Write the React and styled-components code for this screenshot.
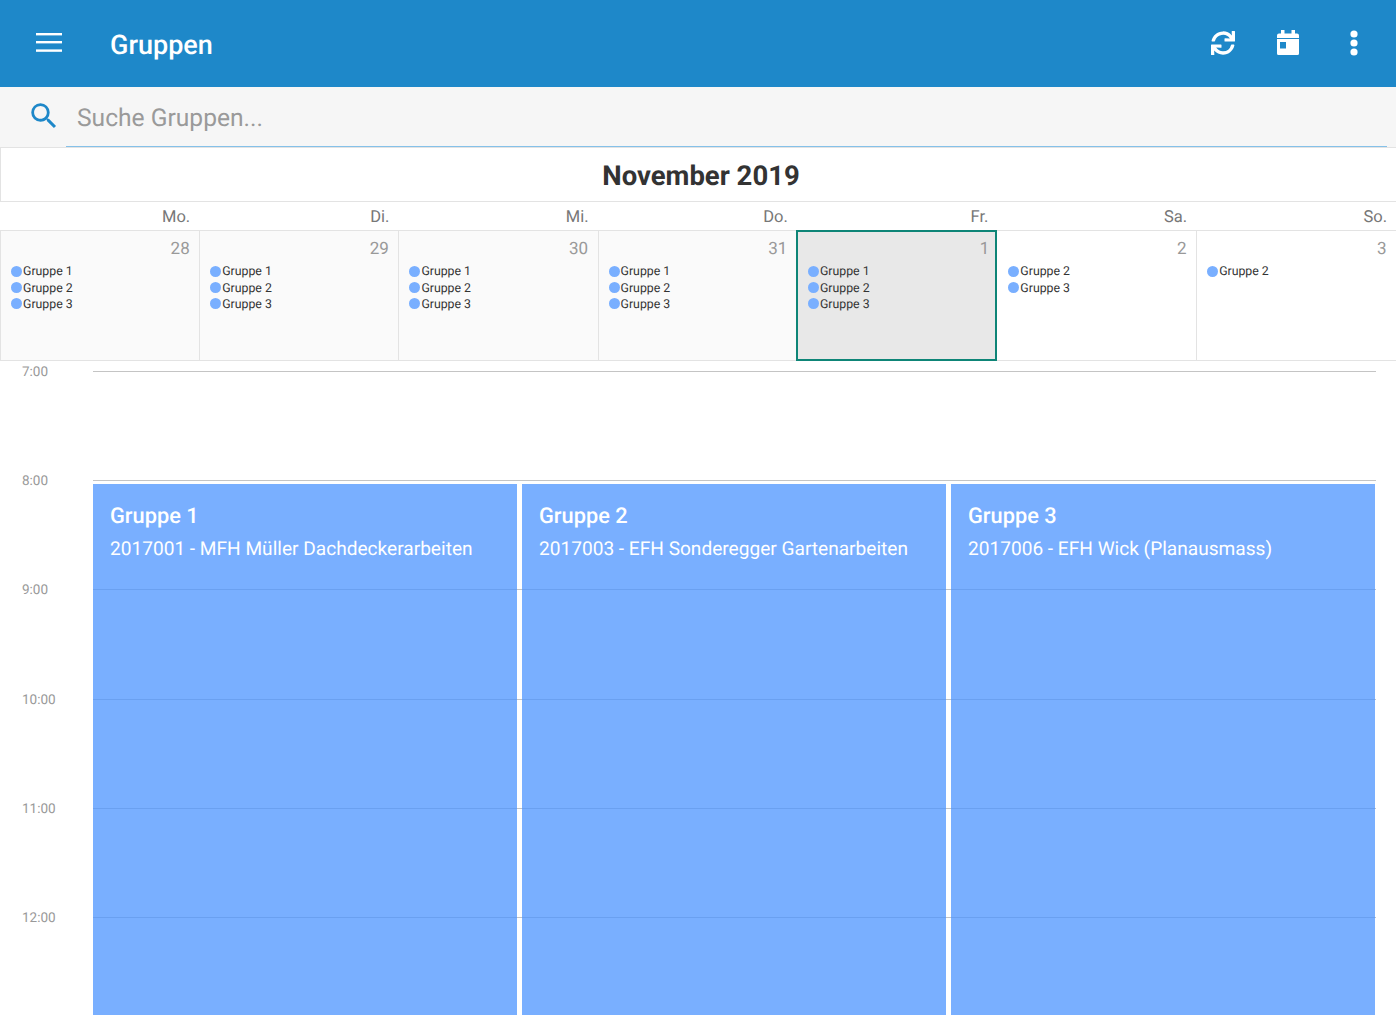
import styled, { createGlobalStyle } from "styled-components";
import { MdSearch } from "react-icons/md";
import { FaSync } from "react-icons/fa";

const GlobalStyle = createGlobalStyle`
  html, body {
    margin: 0;
    padding: 0;
    background: #fff;
    font-family: Roboto, "Liberation Sans", sans-serif;
    text-rendering: geometricPrecision;
  }
`;

const weekDays = [
  { label: "Mo.", day: 28, groups: [1, 2, 3], past: true },
  { label: "Di.", day: 29, groups: [1, 2, 3], past: true },
  { label: "Mi.", day: 30, groups: [1, 2, 3], past: true },
  { label: "Do.", day: 31, groups: [1, 2, 3], past: true },
  { label: "Fr.", day: 1, groups: [1, 2, 3], selected: true },
  { label: "Sa.", day: 2, groups: [2, 3] },
  { label: "So.", day: 3, groups: [2] },
];

const hours = ["7:00", "8:00", "9:00", "10:00", "11:00", "12:00"];

const events = [
  { title: "Gruppe 1", text: "2017001 - MFH Müller Dachdeckerarbeiten" },
  { title: "Gruppe 2", text: "2017003 - EFH Sonderegger Gartenarbeiten" },
  { title: "Gruppe 3", text: "2017006 - EFH Wick (Planausmass)" },
];

const dayColumns = "repeat(4, 199.2px) 200.6px 198.8px 1fr";

const App = () => {
  return (
    <Page>
      <GlobalStyle />
      <Header>
        <MenuButton aria-label="Menü">
          <svg width="26" height="19" viewBox="0 0 26 19" fill="#fff">
            <rect x="0" y="0" width="26" height="2.4" />
            <rect x="0" y="8" width="26" height="2.4" />
            <rect x="0" y="16.400" width="26" height="2.4" />
          </svg>
        </MenuButton>
        <Title>Gruppen</Title>
        <Actions>
          <ActionIcon>
            <FaSync size={24} color="#fff" />
          </ActionIcon>
          <ActionIcon>
            <svg width="22" height="25" viewBox="0 0 22 25" fill="#fff">
              <path d="M4 0h3.500v3.500h7V0h3.500v3.500h2a2 2 0 0 1 2 2V8H0V5.500a2 2 0 0 1 2-2h2z" />
              <path
                fillRule="evenodd"
                d="M0 9h22v14.500a1.500 1.500 0 0 1-1.500 1.500h-19A1.500 1.500 0 0 1 0 23.500zM3 12v6.500h6V12z"
              />
            </svg>
          </ActionIcon>
          <ActionIcon>
            <svg width="10" height="26" viewBox="0 0 10 26" fill="#fff">
              <circle cx="6" cy="4" r="3.600" />
              <circle cx="6" cy="13" r="3.600" />
              <circle cx="6" cy="22" r="3.600" />
            </svg>
          </ActionIcon>
        </Actions>
      </Header>
      <SearchBar>
        <SearchIcon>
          <MdSearch size={34} color="#1e88c9" />
        </SearchIcon>
        <SearchInput placeholder="Suche Gruppen..." readOnly />
      </SearchBar>
      <Month>November 2019</Month>
      <WeekRow>
        {weekDays.map((d) => (
          <WeekLabel key={d.label}>{d.label}</WeekLabel>
        ))}
      </WeekRow>
      <DayRow>
        {weekDays.map((d) => (
          <DayCell key={d.label} $past={d.past} $selected={d.selected}>
            <DayNumber $selected={d.selected}>{d.day}</DayNumber>
            {d.groups.map((g) => (
              <GroupRow key={g}>
                <Dot />
                Gruppe {g}
              </GroupRow>
            ))}
          </DayCell>
        ))}
      </DayRow>
      <Timeline>
        {hours.map((h) => (
          <HourRow key={h}>
            <HourLabel>{h}</HourLabel>
            <HourLine />
          </HourRow>
        ))}
        <Events>
          {events.map((e) => (
            <EventCard key={e.title}>
              <EventTitle>{e.title}</EventTitle>
              <EventText>{e.text}</EventText>
            </EventCard>
          ))}
        </Events>
      </Timeline>
    </Page>
  );
};

const Page = styled.div`
  width: 1396px;
  height: 1015px;
  overflow: hidden;
  background: #fff;
`;
const Header = styled.header`
  height: 87px;
  background: #1e88c9;
  display: flex;
  align-items: center;
  box-sizing: border-box;
  padding: 0 10.500px 0 36px;
`;
const MenuButton = styled.div`
  display: flex;
  width: 74px;
  margin-top: -2px;
`;
const Title = styled.h1`
  margin: 0;
  color: #fff;
  font-size: 27px;
  font-weight: 500;
  flex: 1;
  margin-top: 3px;
`;
const Actions = styled.div`
  display: flex;
  align-items: center;
  margin-top: -2px;
`;
const ActionIcon = styled.div`
  width: 65px;
  display: flex;
  justify-content: center;
`;
const SearchBar = styled.div`
  height: 60px;
  background: #f6f6f6;
  display: flex;
  align-items: center;
  box-sizing: border-box;
  padding-left: 27px;
`;
const SearchIcon = styled.div`
  display: flex;
  width: 50px;
  margin-top: -2px;
`;
const SearchInput = styled.input`
  flex: 1;
  margin-right: 9px;
  height: 60px;
  border: 0;
  border-bottom: 1px solid #85c1e9;
  margin-left: -11px;
  padding: 4px 0 0 11px;
  box-sizing: border-box;
  background: transparent;
  outline: none;
  font-family: Roboto, sans-serif;
  font-size: 24.600px;
  text-rendering: geometricPrecision;
  &::placeholder {
    color: #9a9a9a;
    opacity: 1;
  }
`;
const Month = styled.div`
  height: 54px;
  box-sizing: border-box;
  border: 1px solid #e3e3e3;
  border-width: 1px 0 0 1px;
  text-align: center;
  line-height: 55px;
  font-size: 27.500px;
  font-weight: 700;
  color: #333;
  padding-left: 5px;
`;
const WeekRow = styled.div`
  height: 30px;
  box-sizing: border-box;
  border: 1px solid #e3e3e3;
  border-width: 1px 0;
  display: grid;
  grid-template-columns: ${dayColumns};
`;
const WeekLabel = styled.div`
  text-align: right;
  padding-right: 9px;
  font-size: 16.500px;
  line-height: 32px;
  color: #777;
`;
const DayRow = styled.div`
  height: 130px;
  box-sizing: border-box;
  border-bottom: 1px solid #e3e3e3;
  display: grid;
  grid-template-columns: ${dayColumns};
  grid-template-rows: 129px;
`;
const DayCell = styled.div`
  box-sizing: border-box;
  border-left: 1px solid #e3e3e3;
  background: ${(p) => (p.$past ? "#fafafa" : p.$selected ? "#e8e8e8" : "#fff")};
  padding: 0 9.500px 0 10px;
  ${(p) =>
    p.$selected &&
    `
    border: 2px solid #0e8577;
    height: 131px;
    margin: -1px 0 0 -0.800px;
    padding: 0 6px 0 10px;
    & + div {
      border-left-color: transparent;
    }
  `}
`;
const DayNumber = styled.div`
  text-align: right;
  font-size: 17px;
  line-height: 36px;
  height: 33px;
  color: #999;
  ${(p) => p.$selected && "margin-top: -1px;"}
`;
const GroupRow = styled.div`
  display: flex;
  align-items: center;
  height: 16.400px;
  font-size: 12.300px;
  color: #333;
`;
const Dot = styled.span`
  width: 11px;
  height: 11px;
  border-radius: 50%;
  background: #79afff;
  margin: 0 1px 2px 0;
`;
const Timeline = styled.div`
  position: relative;
  padding-top: 10px;
`;
const HourRow = styled.div`
  height: 109.200px;
  display: flex;
  align-items: flex-start;
  padding-right: 20px;
`;
const HourLabel = styled.div`
  width: 93px;
  box-sizing: border-box;
  padding-left: 22px;
  font-size: 13.500px;
  line-height: 1;
  color: #999;
  margin-top: -5px;
`;
const HourLine = styled.div`
  flex: 1;
  height: 1px;
  background: #c4c4c4;
`;
const Events = styled.div`
  position: absolute;
  left: 93px;
  top: 123px;
  width: 1282px;
  height: 560px;
  display: flex;
  gap: 5px;
`;
const EventCard = styled.div`
  flex: 1;
  background: rgba(76, 148, 255, 0.75);
  color: #fff;
  padding: 20px 17px;
  box-sizing: border-box;
`;
const EventTitle = styled.div`
  font-size: 21.800px;
  font-weight: 500;
  line-height: 26px;
`;
const EventText = styled.div`
  font-size: 19.100px;
  line-height: 24px;
  margin-top: 7px;
  white-space: nowrap;
`;

export default App;
